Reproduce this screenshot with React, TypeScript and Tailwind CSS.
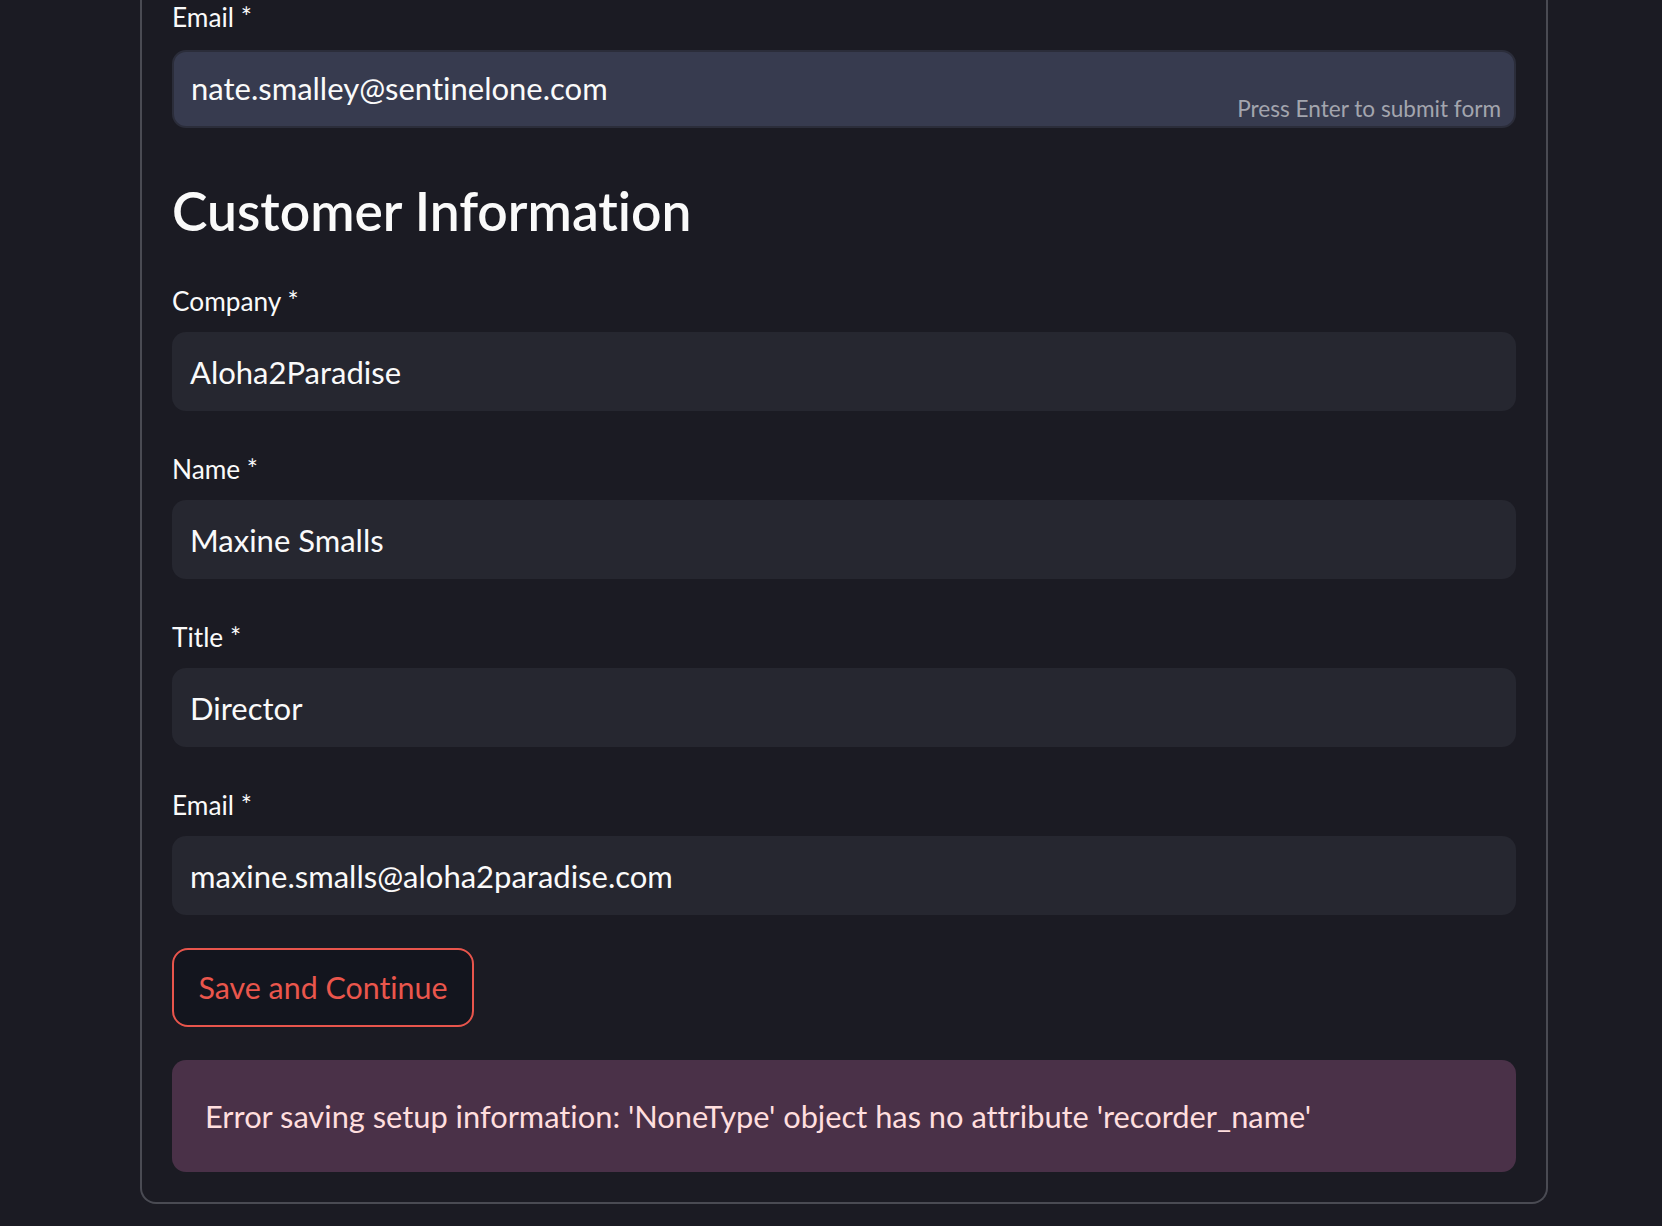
import React from "react";

function Label({ text }: { text: string }) {
  return (
    <div className="h-[34px] leading-[36px] text-[26.25px] text-[#fafafa] whitespace-nowrap">
      {text}
    </div>
  );
}

function Field({ label, value }: { label: string; value: string }) {
  return (
    <div className="flex flex-col mt-[40px]">
      <Label text={label} />
      <div className="mt-[15px] h-[79px] rounded-[14px] bg-[#262730] pl-[18px] pt-[20px]">
        <div className="h-[40px] leading-[40px] text-[31px] text-[#fafafa] whitespace-nowrap">{value}</div>
      </div>
    </div>
  );
}

export default function App() {
  return (
    <div
      className="h-[1226px] overflow-hidden bg-[#1b1b23] [font-variant-ligatures:none]"
      style={{ fontFamily: "Lato, 'Open Sans', sans-serif" }}
    >
      <div className="ml-[140px] w-[1408px] border-x-2 border-b-2 border-[#4a4b53] rounded-b-[16px] px-[30px] pb-[30px]">
        <div className="flex flex-col">
          <div className="-mt-[1px]">
            <Label text="Email *" />
          </div>
          <div className="relative mt-[17px] h-[78px] rounded-[14px] border-2 border-[#2b2d3a] bg-[#373b4f] pl-[17px] pt-[16px]">
            <div className="h-[40px] leading-[40px] text-[31px] text-[#fafafa] whitespace-nowrap">
              nate.smalley@sentinelone.com
            </div>
            <div className="absolute right-[13px] top-[45px] h-[24px] leading-[24px] text-[22.6px] text-[#a3a5ae] whitespace-nowrap">
              Press Enter to submit form
            </div>
          </div>

          <h3 className="mt-[50px] h-[64px] leading-[64px] text-[53.4px] font-semibold text-[#fafafa] whitespace-nowrap">
            Customer Information
          </h3>

          <div className="-mt-[40px] pt-[41px]">
            <Field label="Company *" value="Aloha2Paradise" />
          </div>
          <Field label="Name *" value="Maxine Smalls" />
          <Field label="Title *" value="Director" />
          <Field label="Email *" value="maxine.smalls@aloha2paradise.com" />

          <div className="mt-[33px]">
            <button className="h-[79px] w-[302px] rounded-[16px] border-2 border-[#e8554c] bg-[#13151e] pb-[2px] text-[30.4px] text-[#ea564c] leading-[40px] whitespace-nowrap">
              Save and Continue
            </button>
          </div>

          <div className="mt-[33px] h-[112px] rounded-[14px] bg-[#4a3148] pl-[33px] pt-[2px] flex items-center">
            <span className="text-[30.8px] leading-[40px] text-[#ffdede] whitespace-nowrap">
              Error saving setup information: 'NoneType' object has no attribute 'recorder_name'
            </span>
          </div>
        </div>
      </div>
    </div>
  );
}
